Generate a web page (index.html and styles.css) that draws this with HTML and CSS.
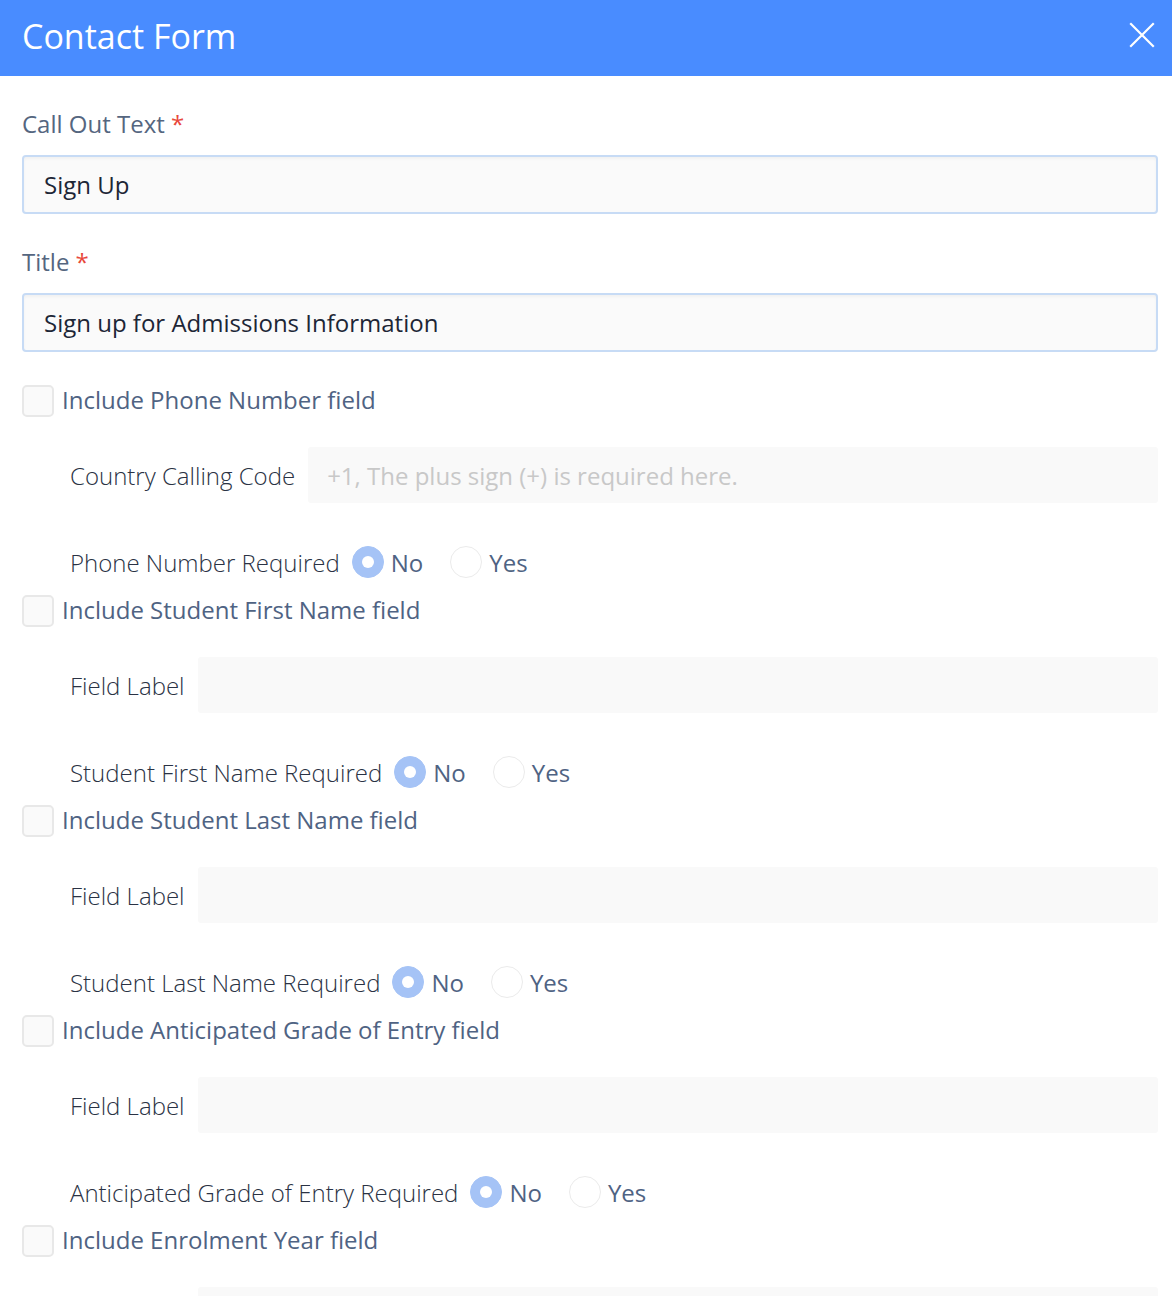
FILE: index.html
```html
<!DOCTYPE html>
<html lang="en">
<head>
<meta charset="utf-8">
<title>Contact Form</title>
<link rel="stylesheet" href="styles.css">
</head>
<body>
<div class="modal">
  <header class="modal-header">
    <h1 class="modal-title">Contact Form</h1>
    <button class="close" aria-label="Close">
      <svg width="26" height="26" viewBox="0 0 26 26"><path d="M2 2 L24 24 M24 2 L2 24" stroke="#fff" stroke-width="2.2" stroke-linecap="square" fill="none"/></svg>
    </button>
  </header>
  <div class="modal-body">
    <div class="field">
      <label class="field-label">Call Out Text <span class="req">*</span></label>
      <input class="text-input" type="text" value="Sign Up" readonly>
    </div>
    <div class="field">
      <label class="field-label">Title <span class="req">*</span></label>
      <input class="text-input" type="text" value="Sign up for Admissions Information" readonly>
    </div>

    <div class="group group-first">
      <div class="check-row"><span class="checkbox"></span><span class="check-label">Include Phone Number field</span></div>
      <div class="sub-row"><span class="sub-label">Country Calling Code</span><input class="plain-input" type="text" placeholder="+1, The plus sign (+) is required here." readonly></div>
      <div class="radio-row"><span class="sub-label">Phone Number Required</span>
        <span class="radio checked"></span><span class="radio-label">No</span>
        <span class="radio"></span><span class="radio-label">Yes</span></div>
    </div>

    <div class="group">
      <div class="check-row"><span class="checkbox"></span><span class="check-label">Include Student First Name field</span></div>
      <div class="sub-row"><span class="sub-label">Field Label</span><input class="plain-input" type="text" readonly></div>
      <div class="radio-row"><span class="sub-label">Student First Name Required</span>
        <span class="radio checked"></span><span class="radio-label">No</span>
        <span class="radio"></span><span class="radio-label">Yes</span></div>
    </div>

    <div class="group">
      <div class="check-row"><span class="checkbox"></span><span class="check-label">Include Student Last Name field</span></div>
      <div class="sub-row"><span class="sub-label">Field Label</span><input class="plain-input" type="text" readonly></div>
      <div class="radio-row"><span class="sub-label">Student Last Name Required</span>
        <span class="radio checked"></span><span class="radio-label">No</span>
        <span class="radio"></span><span class="radio-label">Yes</span></div>
    </div>

    <div class="group">
      <div class="check-row"><span class="checkbox"></span><span class="check-label">Include Anticipated Grade of Entry field</span></div>
      <div class="sub-row"><span class="sub-label">Field Label</span><input class="plain-input" type="text" readonly></div>
      <div class="radio-row"><span class="sub-label">Anticipated Grade of Entry Required</span>
        <span class="radio checked"></span><span class="radio-label">No</span>
        <span class="radio"></span><span class="radio-label">Yes</span></div>
    </div>

    <div class="group">
      <div class="check-row"><span class="checkbox"></span><span class="check-label">Include Enrolment Year field</span></div>
      <div class="sub-row"><span class="sub-label">Field Label</span><input class="plain-input" type="text" readonly></div>
    </div>
  </div>
</div>
</body>
</html>
```

FILE: styles.css
```css
html, body {
  margin: 0;
  padding: 0;
  background: #fff;
}
body {
  font-family: "Open Sans", "Noto Sans", sans-serif;
  font-size: 24px;
  overflow: hidden;
  height: 1296px;
}
.modal-header {
  height: 76px;
  background: #498cff;
  display: flex;
  align-items: center;
  justify-content: space-between;
  padding: 0 17px 0 22px;
  box-sizing: border-box;
}
.modal-title {
  margin: 0;
  font-weight: 400;
  font-size: 34px;
  line-height: 40px;
  color: #fff;
  padding-bottom: 4px;
}
.close {
  background: none;
  border: 0;
  padding: 0;
  width: 26px;
  height: 26px;
  margin-top: -6px;
  display: flex;
}
.modal-body {
  padding: 0 14px 0 22px;
}
.field {
  display: flex;
  flex-direction: column;
}
.field:first-child {
  padding-top: 32px;
}
.field + .field {
  margin-top: 32px;
}
.field-label {
  line-height: 32px;
  color: #55667f;
  margin-bottom: 15px;
}
.req {
  color: #e8483b;
}
.text-input {
  height: 59px;
  box-sizing: border-box;
  border: 2px solid #c7dbf5;
  border-radius: 4px;
  background: #fafafa;
  box-shadow: inset 0 2px 3px rgba(0,0,0,0.04);
  font: inherit;
  color: #1d2636;
  padding: 0 20px;
  outline: none;
}
.group-first {
  margin-top: 33px;
}
.group {
  padding-bottom: 17px;
}
.check-row {
  display: flex;
  align-items: center;
  height: 32px;
}
.checkbox {
  width: 32px;
  height: 32px;
  box-sizing: border-box;
  border: 2px solid #e8e8e8;
  border-radius: 5px;
  background: #fafafa;
  flex: none;
}
.check-label {
  margin-left: 8px;
  color: #4f6383;
  line-height: 32px;
  margin-top: -3px;
}
.sub-row {
  display: flex;
  align-items: center;
  margin: 30px 0 0 48px;
  height: 56px;
}
.sub-label {
  color: #2a3244;
  font-weight: 300;
  white-space: nowrap;
}
.plain-input {
  flex: 1;
  margin-left: 13px;
  height: 56px;
  box-sizing: border-box;
  border: 0;
  border-radius: 3px;
  background: #f9f9f9;
  font: inherit;
  color: #2a3244;
  padding: 0 19px;
  outline: none;
  min-width: 0;
}
.plain-input::placeholder {
  color: #c8c8c8;
}
.radio-row {
  display: flex;
  align-items: center;
  margin: 43px 0 0 48px;
  height: 32px;
}
.radio {
  width: 32px;
  height: 32px;
  box-sizing: border-box;
  border-radius: 50%;
  border: 1px solid #ebebeb;
  background: #fff;
  flex: none;
  margin-left: 12px;
  position: relative;
}
.radio-label + .radio {
  margin-left: 27px;
}
.radio.checked {
  background: #a5c3f6;
  border-color: #a5c3f6;
}
.radio.checked::after {
  content: "";
  position: absolute;
  left: 50%;
  top: 50%;
  width: 12px;
  height: 12px;
  margin: -6px 0 0 -6px;
  border-radius: 50%;
  background: #fff;
}
.radio-label {
  margin-left: 7px;
  color: #4f6383;
}
```
